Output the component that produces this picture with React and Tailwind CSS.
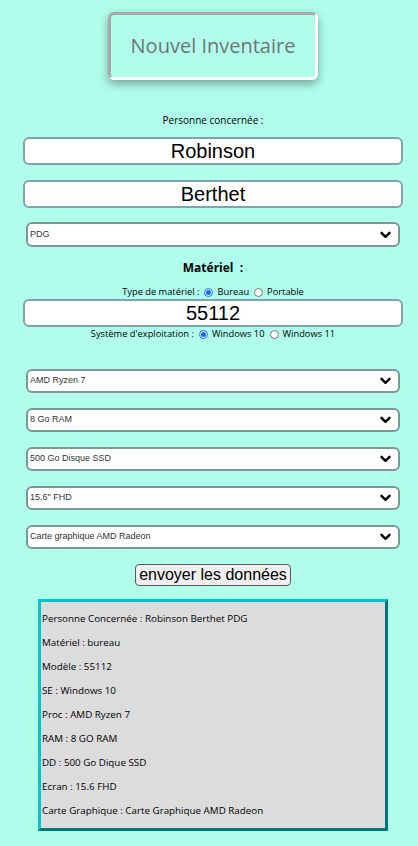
import React from 'react';

const comic = "font-['Comic_Sans_MS','Open_Sans',sans-serif]";

const Chevron = () => (
  <svg width="11" height="8" viewBox="0 0 11 8" className="absolute right-[7px] top-1/2 -translate-y-1/2">
    <polyline points="1.5,1.8 5.5,5.8 9.5,1.8" fill="none" stroke="#000" strokeWidth="2.4" strokeLinecap="round" strokeLinejoin="round" />
  </svg>
);

const Select = ({ label, className = '' }) => (
  <div className={`relative w-[374px] h-[24px] bg-white border-2 border-[#7a9896] rounded-[6px] flex items-center ${className}`}>
    <span className="pl-[2px] text-[9px] text-[#333] font-['Liberation_Sans',Arial,sans-serif]">{label}</span>
    <Chevron />
  </div>
);

const TextBox = ({ value, className = '' }) => (
  <div className={`w-[380px] h-[28px] bg-white border-2 border-[#7fa4b0] rounded-[6px] flex items-center justify-center text-[20px] text-black font-['Liberation_Sans',Arial,sans-serif] ${className}`}>
    {value}
  </div>
);

const Radio = ({ checked }) => (
  <span className={`inline-flex w-[9px] h-[9px] rounded-full border items-center justify-center bg-white ml-[5px] mr-[4px] ${checked ? 'border-[#0a6cff]' : 'border-[#767676]'}`}>
    {checked && <span className="w-[5px] h-[5px] rounded-full bg-[#0a6cff]" />}
  </span>
);

const summary = [
  'Personne Concernée : Robinson Berthet PDG',
  'Matériel : bureau',
  'Modèle : 55112',
  'SE : Windows 10',
  'Proc : AMD Ryzen 7',
  'RAM : 8 GO RAM',
  'DD : 500 Go Dique SSD',
  'Ecran : 15.6 FHD',
  'Carte Graphique : Carte Graphique AMD Radeon',
];

export default function App() {
  return (
    <div className="min-h-[846px] bg-[#b0fdec] pl-[8px] pb-[16px] flex flex-col items-center">
      <div className="mt-[12px] w-[210px] h-[68px] rounded-[6px] border-[3px] border-t-[#a9a9a9] border-l-[#a9a9a9] border-r-white border-b-white shadow-[0_4px_10px_rgba(0,0,0,0.35)] flex items-center justify-center">
        <span className={`${comic} text-[20px] text-[#707575]`}>Nouvel Inventaire</span>
      </div>

      <div className={`${comic} mt-[34px] h-[12px] leading-[12px] text-[10px] text-black`}>Personne concernée :</div>
      <TextBox value="Robinson" className="mt-[11px] h-[27px]" />
      <TextBox value="Berthet" className="mt-[15px]" />
      <Select label="PDG" className="mt-[14px] h-[25px]" />

      <div className={`${comic} mt-[13px] h-[16px] leading-[16px] text-[12px] font-bold text-black`}>Matériel&nbsp; :</div>
      <div className={`${comic} mt-[10px] h-[12px] flex items-center text-[9.3px] text-black`}>
        <span>Type de matériel :</span>
        <Radio checked />
        <span>Bureau</span>
        <Radio />
        <span>Portable</span>
      </div>
      <TextBox value="55112" className="mt-[1px]" />
      <div className={`${comic} mt-[1px] h-[12px] flex items-center text-[9.3px] text-black`}>
        <span>Système d'exploitation :</span>
        <Radio checked />
        <span>Windows 10</span>
        <Radio />
        <span>Windows 11</span>
      </div>

      <Select label="AMD Ryzen 7" className="mt-[29px]" />
      <Select label="8 Go RAM" className="mt-[15px]" />
      <Select label="500 Go Disque SSD" className="mt-[15px]" />
      <Select label="15.6&quot; FHD" className="mt-[15px]" />
      <Select label="Carte graphique AMD Radeon" className="mt-[15px]" />

      <button className="mt-[15px] h-[22px] px-[3px] bg-[#efefef] border border-[#5a5a5a] rounded-[4px] text-[16px] leading-[18px] text-black font-['Liberation_Sans',Arial,sans-serif]">
        envoyer les données
      </button>

      <div className="mt-[13px] w-[350px] h-[232px] bg-[#dcdcdc] border-[3px] border-t-[#00c8c8] border-l-[#00c8c8] border-r-[#007878] border-b-[#007878] pt-[5px] pl-[1px]">
        {summary.map((line) => (
          <div key={line} className={`${comic} h-[24px] leading-[24px] text-[9.8px] text-black`}>{line}</div>
        ))}
      </div>
    </div>
  );
}
